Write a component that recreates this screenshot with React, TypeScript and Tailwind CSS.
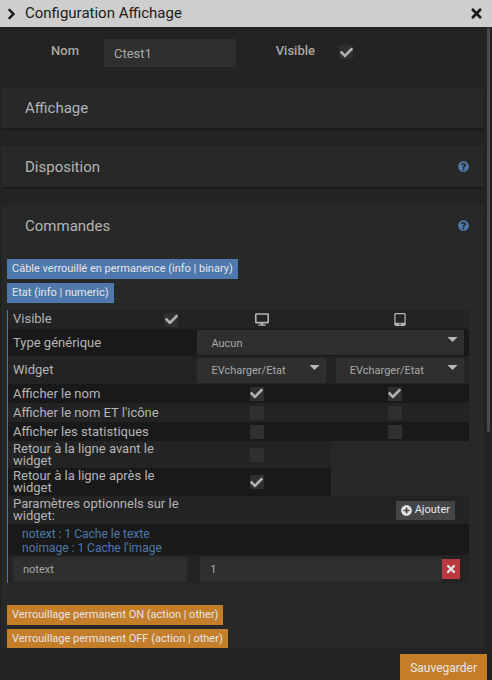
import React from "react";
import { FaCheck, FaChevronRight, FaDesktop, FaPlusCircle, FaQuestionCircle, FaTabletAlt, FaTimes } from "react-icons/fa";

function Check({ label, checked = false, id }: { label?: string; checked?: boolean; id?: string }) {
  return (
    <span className="relative block size-3.5 shrink-0">
      <input
        id={id}
        type="checkbox"
        aria-label={label}
        defaultChecked={checked}
        className="peer block size-3.5 appearance-none bg-[#2f2f2f]"
      />
      <FaCheck className="pointer-events-none absolute inset-0 m-auto hidden size-[13px] text-[#b0b0b0] peer-checked:block" />
    </span>
  );
}

function Choice({ label, value }: { label: string; value: string }) {
  return (
    <span className="relative block">
      <select
        aria-label={label}
        className="block h-[25px] w-full appearance-none bg-[#2f2f2f] pl-3.5 pr-6 pt-0.5 text-[11px] text-[#a8a8a8] outline-none"
      >
        <option>{value}</option>
      </select>
      <svg viewBox="0 0 10 5" className="pointer-events-none absolute right-1.5 top-[7px] h-[5px] w-[11px] fill-[#b8b8b8]">
        <path d="M0 0h10L5 5z" />
      </svg>
    </span>
  );
}

function Tag({ children, tone }: { children: string; tone: string }) {
  return (
    <button type="button" className={"block h-5 px-[5px] text-[11px] leading-5 text-[#e6e6e6] " + tone}>
      {children}
    </button>
  );
}

function Panel({ title, help = false }: { title: string; help?: boolean }) {
  return (
    <div className="flex h-[41px] items-center justify-between pl-6 pr-[15px]">
      <h2 className="pt-px text-[15px] leading-5">{title}</h2>
      {help && (
        <button type="button" aria-label={"Aide " + title} className="text-[#4f78ad]">
          <FaQuestionCircle className="size-[11px]" />
        </button>
      )}
    </div>
  );
}

const toggles = [
  { label: "Afficher le nom", states: [true, true], height: "h-[19px]" },
  { label: "Afficher le nom ET l'icône", states: [false, false], height: "h-[19px]" },
  { label: "Afficher les statistiques", states: [false, false], height: "h-[19px]" },
  { label: "Retour à la ligne avant le widget", states: [false], height: "h-[27px]" },
  { label: "Retour à la ligne après le widget", states: [true], height: "h-7" },
];

const cardShadow = "bg-[#272928] shadow-[0_2px_2px_-1px_#141414]";
const light = "bg-[#232323]";
const dark = "bg-[#191919]";

export default function App() {
  return (
    <div className="flex h-screen flex-col bg-[#232323] font-[Roboto,sans-serif] text-[13px] text-[#b4b4b4]">
      <header className="flex h-[27px] shrink-0 items-center bg-[#cecece] pl-[7px] pr-2 text-[#1c1c1c]">
        <FaChevronRight className="h-3 w-[9px] stroke-current stroke-[30]" />
        <h1 className="ml-[9px] flex-1 pb-0.5 text-[15px] leading-5">Configuration Affichage</h1>
        <button type="button" aria-label="Fermer">
          <FaTimes className="size-[15px]" />
        </button>
      </header>

      <div className="relative flex min-h-0 flex-1">
        <main className="min-w-0 flex-1 overflow-hidden pl-px pr-2">
          <div className="flex h-[60px] pt-3">
            <label htmlFor="nom" className="w-[78px] pt-0.5 text-right font-medium leading-5 text-[#a8a8a8]">
              Nom
            </label>
            <input
              id="nom"
              defaultValue="Ctest1"
              className="ml-[25px] h-7 w-[132px] bg-[#2f2f2f] px-2.5 text-[13px] text-[#a8a8a8] outline-none"
            />
            <label htmlFor="visible" className="w-[79px] pt-0.5 text-right font-medium leading-5 text-[#a8a8a8]">
              Visible
            </label>
            <span className="ml-6 pt-1.5">
              <Check id="visible" checked />
            </span>
          </div>

          <section className={cardShadow}>
            <Panel title="Affichage" />
          </section>
          <section className={"mt-[18px] " + cardShadow}>
            <Panel title="Disposition" help />
          </section>
          <section className={"mt-[18px] " + cardShadow}>
            <Panel title="Commandes" help />
            <div className="pb-8 pl-1.5 pr-[15px] pt-[13px]">
              <div className="flex flex-col items-start gap-1">
                <Tag tone="bg-[#4f78ad]">Câble verrouillé en permanence (info | binary)</Tag>
                <Tag tone="bg-[#4f78ad]">Etat (info | numeric)</Tag>
              </div>

              <div className="mt-[7px] border-l border-[#4f78ad]">
                <table className="w-full table-fixed border-collapse leading-3">
                  <colgroup>
                    <col />
                    <col className="w-[30%]" />
                    <col className="w-[30%]" />
                  </colgroup>
                  <thead>
                    <tr className={"h-[19px] " + light}>
                      <th className="p-0 pl-[5px] pr-3.5 font-normal">
                        <span className="flex items-center justify-between">
                          <label htmlFor="cmd-visible" className="pb-0.5">
                            Visible
                          </label>
                          <Check id="cmd-visible" checked />
                        </span>
                      </th>
                      <th className="p-0">
                        <FaDesktop aria-label="Bureau" className="mx-auto h-[13px] w-3.5" />
                      </th>
                      <th className="p-0">
                        <FaTabletAlt aria-label="Tablette" className="mx-auto h-[13px] w-3" />
                      </th>
                    </tr>
                  </thead>
                  <tbody>
                    <tr className={"h-[27px] " + dark}>
                      <td className="p-0 pl-[5px]">Type générique</td>
                      <td colSpan={2} className="px-[5px] py-px">
                        <Choice label="Type générique" value="Aucun" />
                      </td>
                    </tr>
                    <tr className={"h-7 " + light}>
                      <td className="p-0 pl-[5px]">Widget</td>
                      <td className="px-[5px] py-px">
                        <Choice label="Widget bureau" value="EVcharger/Etat" />
                      </td>
                      <td className="px-[5px] py-px">
                        <Choice label="Widget tablette" value="EVcharger/Etat" />
                      </td>
                    </tr>
                    {toggles.map((row, i) => (
                      <tr key={row.label} className={row.height}>
                        <td className={"p-0 px-[5px] " + (i % 2 ? light : dark)}>{row.label}</td>
                        {row.states.map((on, j) => (
                          <td key={j} className={"p-0 pr-2.5 " + (i % 2 ? light : dark)}>
                            <span className="flex justify-center">
                              <Check label={row.label + (j ? " tablette" : " bureau")} checked={on} />
                            </span>
                          </td>
                        ))}
                      </tr>
                    ))}
                    <tr className={"h-7 " + light}>
                      <td className="p-0 px-[5px]">Paramètres optionnels sur le widget:</td>
                      <td colSpan={2} className="p-0 pr-3.5">
                        <button
                          type="button"
                          className="ml-auto flex h-[19px] items-center gap-[3px] bg-[#444546] px-[5px] text-[11px] text-[#e6e6e6]"
                        >
                          <FaPlusCircle className="size-[11px]" />
                          Ajouter
                        </button>
                      </td>
                    </tr>
                    <tr className={"h-[31px] " + dark}>
                      <td colSpan={3} className="p-0 pl-3.5 pt-0.5 text-xs leading-3.5 text-[#4f78ad]">
                        notext : 1 Cache le texte
                        <br />
                        noimage : 1 Cache l'image
                      </td>
                    </tr>
                    <tr className={"h-7 " + light}>
                      <td colSpan={3} className="p-0 pl-[5px] pr-[9px]">
                        <div className="flex items-center">
                          <input
                            aria-label="Nom du paramètre"
                            defaultValue="notext"
                            className="h-[25px] w-[39%] bg-[#2f2f2f] px-2.5 text-[11px] text-[#a8a8a8] outline-none"
                          />
                          <input
                            aria-label="Valeur du paramètre"
                            defaultValue="1"
                            className="ml-[13px] h-[25px] min-w-0 flex-1 bg-[#2f2f2f] px-2.5 text-[11px] text-[#a8a8a8] outline-none"
                          />
                          <button
                            type="button"
                            aria-label="Supprimer"
                            className="flex h-5 w-[18px] items-center justify-center bg-[#bb383f] text-[#e6e6e6]"
                          >
                            <FaTimes className="size-3" />
                          </button>
                        </div>
                      </td>
                    </tr>
                  </tbody>
                </table>
              </div>

              <div className="mt-[22px] flex flex-col items-start gap-1">
                <Tag tone="bg-[#c47d29]">Verrouillage permanent ON (action | other)</Tag>
                <Tag tone="bg-[#c47d29]">Verrouillage permanent OFF (action | other)</Tag>
              </div>
            </div>
          </section>
        </main>
        <div className="absolute right-0.5 top-px h-[65%] w-[3px] rounded bg-[#4a4a4a]" />
      </div>

      <footer className="flex h-8 shrink-0 justify-end pr-[5px] pt-1.5">
        <button type="button" className="bg-[#c47d29] px-2.5 pt-0.5 text-xs text-[#e6e6e6]">
          Sauvegarder
        </button>
      </footer>
    </div>
  );
}
